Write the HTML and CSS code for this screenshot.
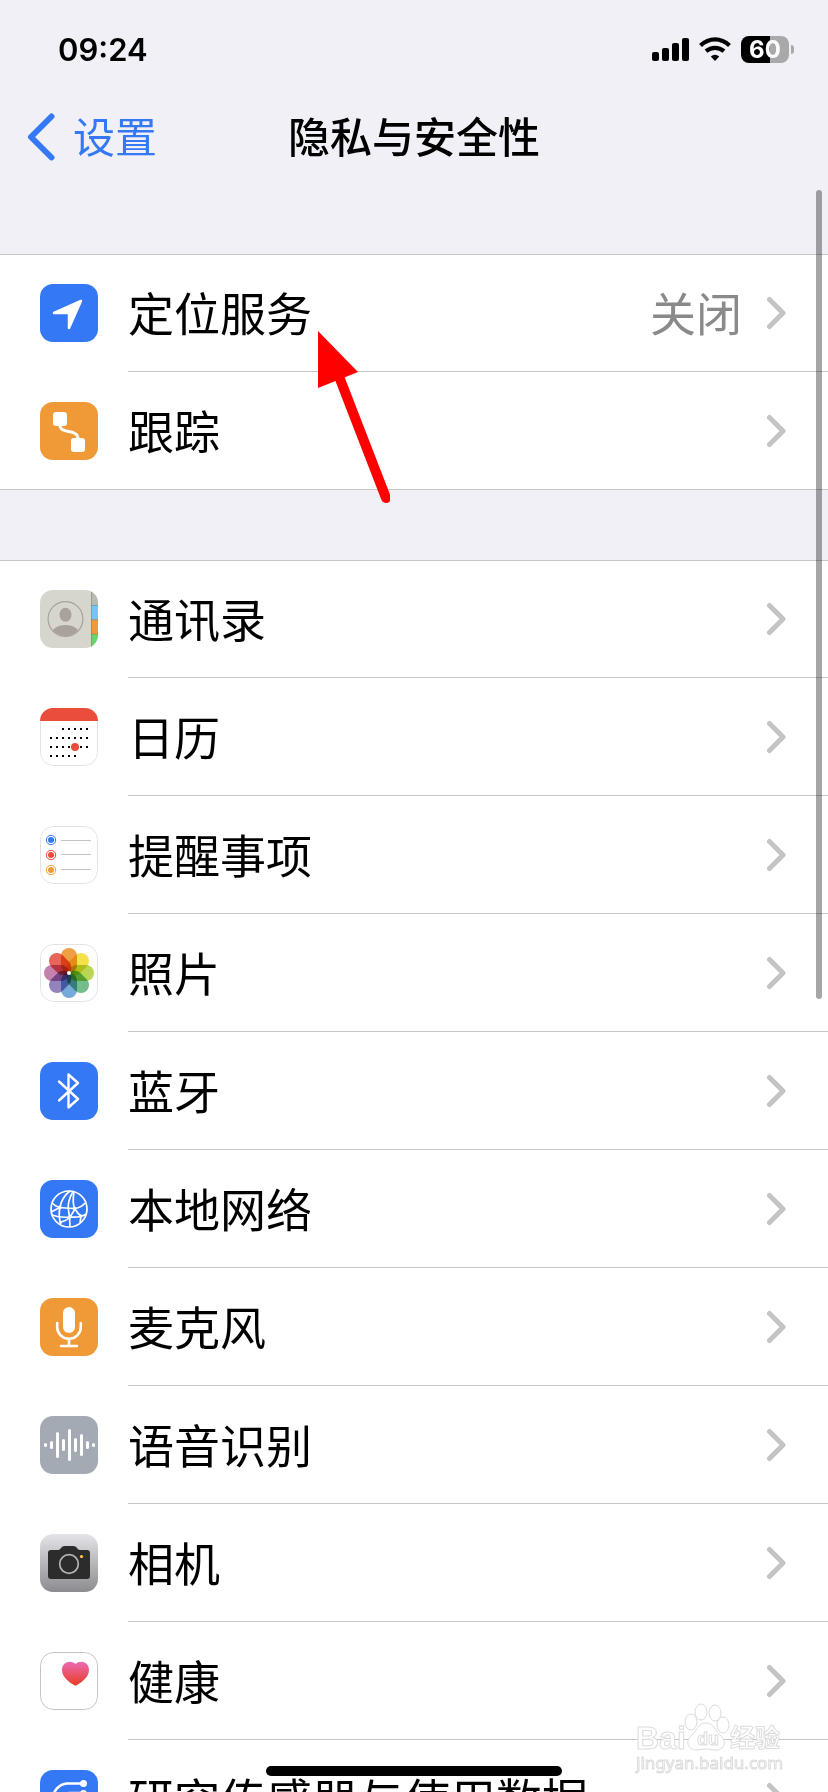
FILE: index.html
```html
<!DOCTYPE html>
<html lang="zh-CN">

<head>
    <title>隐私与安全性</title>
    <meta charset="UTF-8">
    <meta name="viewport" content="width=device-width, initial-scale=1.0">
    <link rel="stylesheet" href="styles.css">
</head>

<body>
    <div class="statusBar">
        <time class="statusBar-time">09:24</time>
        <div class="statusBar-icons">
            <svg width="37" height="24" viewBox="0 0 37 24">
                <rect x="0" y="15" width="7" height="9" rx="2" />
                <rect x="10" y="11" width="7" height="13" rx="2" />
                <rect x="20" y="6" width="7" height="18" rx="2" />
                <rect x="30" y="1" width="7" height="23" rx="2" />
            </svg>
            <svg width="32" height="24" viewBox="0 0 32 24">
                <path d="M1.500 8.500Q8 2.400 16 2.400T30.500 8.500" fill="none" stroke="#000" stroke-width="4.200" />
                <path d="M7 14.200Q11 10.800 16 10.800T25 14.200" fill="none" stroke="#000" stroke-width="4.200" />
                <path d="M11.800 19.500Q16 16 20.200 19.500L16 24z" />
            </svg>
            <div class="battery"><span class="battery-level">60</span></div>
        </div>
    </div>
    <header class="navBar">
        <a class="navBar-back" href="#">
            <svg width="28" height="48" viewBox="0 0 28 48">
                <path d="M24.500 3.500L4 24l20.500 20.500" />
            </svg>
            <span>设置</span>
        </a>
        <h1 class="navBar-title">隐私与安全性</h1>
    </header>
    <main>
        <nav class="group">
            <a class="row" href="#">
                <svg class="row-icon blue" viewBox="0 0 58 58">
                    <path d="M41 17L14 29h15v15z" fill="#fff" stroke="#fff" stroke-width="2.500" stroke-linejoin="round" />
                </svg>
                <span class="row-body">
                    <span class="row-label">定位服务</span>
                    <span class="row-value">关闭</span>
                    <svg class="chevron" viewBox="0 0 20 34"><path d="M3.500 3.500L17 17 3.500 30.500" /></svg>
                </span>
            </a>
            <a class="row" href="#">
                <svg class="row-icon orange" viewBox="0 0 58 58">
                    <rect x="13" y="10" width="14" height="14" rx="3" fill="#fff" />
                    <rect x="31" y="36" width="14" height="14" rx="3" fill="#fff" />
                    <path d="M20 23C20 33 38 26 38 37" fill="none" stroke="#fff" stroke-width="3" />
                </svg>
                <span class="row-body">
                    <span class="row-label">跟踪</span>
                    <svg class="chevron" viewBox="0 0 20 34"><path d="M3.500 3.500L17 17 3.500 30.500" /></svg>
                </span>
            </a>
        </nav>
        <nav class="group">
            <a class="row" href="#">
                <svg class="row-icon contacts" viewBox="0 0 58 58">
                    <clipPath id="avatar"><circle cx="25.500" cy="29" r="17" /></clipPath>
                    <rect x="51" width="7" height="15" fill="#b9bab1" />
                    <rect x="51" y="15" width="7" height="15" fill="#76c3f5" />
                    <rect x="51" y="29.500" width="7" height="15" fill="#f09a37" />
                    <rect x="51" y="44" width="7" height="14" fill="#6cd36d" />
                    <path d="M51 15.500h7M51 29.800h7M51 44.300h7M51.500 0v58" stroke="#6d6d5c" stroke-opacity=".4" />
                    <circle cx="25.500" cy="29" r="17.400" fill="none" stroke="#a9a19c" stroke-width="1.200" />
                    <ellipse cx="25.500" cy="24.800" rx="6" ry="7" fill="#a9a19c" />
                    <ellipse cx="25.500" cy="46" rx="15" ry="11" fill="#a9a19c" clip-path="url(#avatar)" />
                </svg>
                <span class="row-body">
                    <span class="row-label">通讯录</span>
                    <svg class="chevron" viewBox="0 0 20 34"><path d="M3.500 3.500L17 17 3.500 30.500" /></svg>
                </span>
            </a>
            <a class="row" href="#">
                <svg class="row-icon" viewBox="0 0 58 58">
                    <rect x=".5" y=".5" width="57" height="57" rx="13" fill="#fff" stroke="#e2e2e4" />
                    <path d="M0 13V0h58v13z" fill="#eb4d3d" />
                    <g stroke="#000" stroke-width="2" stroke-dasharray="2 4">
                        <path d="M22 21h26M10 30h38M10 39h38M10 48h26" />
                    </g>
                    <circle cx="35" cy="39" r="4" fill="#eb4d3d" />
                </svg>
                <span class="row-body">
                    <span class="row-label">日历</span>
                    <svg class="chevron" viewBox="0 0 20 34"><path d="M3.500 3.500L17 17 3.500 30.500" /></svg>
                </span>
            </a>
            <a class="row" href="#">
                <svg class="row-icon" viewBox="0 0 58 58">
                    <rect x=".5" y=".5" width="57" height="57" rx="13" fill="#fff" stroke="#e2e2e4" />
                    <g fill="none">
                        <circle cx="11" cy="14" r="4.700" stroke="#3478f6" />
                        <circle cx="11" cy="29" r="4.700" stroke="#eb4d3d" />
                        <circle cx="11" cy="44" r="4.700" stroke="#f09a37" />
                    </g>
                    <circle cx="11" cy="14" r="3" fill="#3478f6" />
                    <circle cx="11" cy="29" r="3" fill="#eb4d3d" />
                    <circle cx="11" cy="44" r="3" fill="#f09a37" />
                    <path d="M21 14.500h30M21 28.500h30M21 43.500h30" stroke="#c4c4c6" />
                </svg>
                <span class="row-body">
                    <span class="row-label">提醒事项</span>
                    <svg class="chevron" viewBox="0 0 20 34"><path d="M3.500 3.500L17 17 3.500 30.500" /></svg>
                </span>
            </a>
            <a class="row" href="#">
                <svg class="row-icon" viewBox="0 0 58 58">
                    <rect x=".5" y=".5" width="57" height="57" rx="13" fill="#fff" stroke="#e2e2e4" />
                    <g class="petals">
                        <rect x="21" y="4" width="16" height="25" rx="8" fill="#f0a044" />
                        <rect x="21" y="4" width="16" height="25" rx="8" fill="#f4e04a" transform="rotate(45 29 29)" />
                        <rect x="21" y="4" width="16" height="25" rx="8" fill="#b9d655" transform="rotate(90 29 29)" />
                        <rect x="21" y="4" width="16" height="25" rx="8" fill="#72bd8b" transform="rotate(135 29 29)" />
                        <rect x="21" y="4" width="16" height="25" rx="8" fill="#76aadb" transform="rotate(180 29 29)" />
                        <rect x="21" y="4" width="16" height="25" rx="8" fill="#9384bd" transform="rotate(225 29 29)" />
                        <rect x="21" y="4" width="16" height="25" rx="8" fill="#c582b0" transform="rotate(270 29 29)" />
                        <rect x="21" y="4" width="16" height="25" rx="8" fill="#e8655a" transform="rotate(315 29 29)" />
                    </g>
                    <circle cx="29" cy="29" r="2" fill="#fff" />
                </svg>
                <span class="row-body">
                    <span class="row-label">照片</span>
                    <svg class="chevron" viewBox="0 0 20 34"><path d="M3.500 3.500L17 17 3.500 30.500" /></svg>
                </span>
            </a>
            <a class="row" href="#">
                <svg class="row-icon blue" viewBox="0 0 58 58">
                    <path d="M19 19.500L38 37l-9.500 8.500v-33L38 21 19 38.500" fill="none" stroke="#fff" stroke-width="2.400" stroke-linejoin="round" stroke-linecap="round" />
                </svg>
                <span class="row-body">
                    <span class="row-label">蓝牙</span>
                    <svg class="chevron" viewBox="0 0 20 34"><path d="M3.500 3.500L17 17 3.500 30.500" /></svg>
                </span>
            </a>
            <a class="row" href="#">
                <svg class="row-icon blue" viewBox="0 0 58 58">
                    <g fill="none" stroke="#fff" stroke-width="1.700">
                        <circle cx="29" cy="29" r="18" />
                        <path d="M30 11Q22 17 20 27T21 44" />
                        <path d="M33 11.500Q27 22 28.500 30T30 47" />
                        <path d="M34 11.500Q32 24 35 29T41 36L40 43" />
                        <path d="M12 23Q16 27 20 27.500T34 28.500Q41 28 45 23" />
                        <path d="M11 32L20 27.500M12 35Q20 38 30 37L35 29M30 37Q40 38 46.500 34M19 42Q25 42 30 37" />
                    </g>
                    <g fill="#fff">
                        <circle cx="20" cy="27.500" r="1.700" />
                        <circle cx="34.500" cy="28.500" r="1.700" />
                        <circle cx="30" cy="37" r="1.700" />
                        <circle cx="40.500" cy="36" r="1.700" />
                    </g>
                </svg>
                <span class="row-body">
                    <span class="row-label">本地网络</span>
                    <svg class="chevron" viewBox="0 0 20 34"><path d="M3.500 3.500L17 17 3.500 30.500" /></svg>
                </span>
            </a>
            <a class="row" href="#">
                <svg class="row-icon orange" viewBox="0 0 58 58">
                    <rect x="23" y="9" width="12" height="26" rx="6" fill="#fff" />
                    <path d="M17.200 25v4a11.800 11.800 0 0 0 23.600 0v-4M29 41v7M21 48h16" fill="none" stroke="#fff" stroke-width="2.600" stroke-linecap="round" />
                </svg>
                <span class="row-body">
                    <span class="row-label">麦克风</span>
                    <svg class="chevron" viewBox="0 0 20 34"><path d="M3.500 3.500L17 17 3.500 30.500" /></svg>
                </span>
            </a>
            <a class="row" href="#">
                <svg class="row-icon gray" viewBox="0 0 58 58">
                    <path d="M5.500 28.500v1M11.500 26.500v5M17.500 17.500v23M23.500 24.500v9M29.500 14.500v29M35.500 23.500v11M41.500 19.500v19M47.500 26.500v5M53.500 28.500v1" stroke="#fff" stroke-width="3" stroke-linecap="round" />
                </svg>
                <span class="row-body">
                    <span class="row-label">语音识别</span>
                    <svg class="chevron" viewBox="0 0 20 34"><path d="M3.500 3.500L17 17 3.500 30.500" /></svg>
                </span>
            </a>
            <a class="row" href="#">
                <svg class="row-icon camera" viewBox="0 0 58 58">
                    <path d="M11 16h7q2 0 3-2t4-2h8q3 0 4 2t3 2h7q3 0 3 3v23q0 3-3 3H11q-3 0-3-3V19q0-3 3-3z" fill="#2c2c2c" />
                    <circle cx="29" cy="30" r="9.300" fill="none" stroke="#b4b4b8" stroke-width="1.700" />
                    <circle cx="41.500" cy="22.500" r="1.600" fill="#f7ce46" />
                </svg>
                <span class="row-body">
                    <span class="row-label">相机</span>
                    <svg class="chevron" viewBox="0 0 20 34"><path d="M3.500 3.500L17 17 3.500 30.500" /></svg>
                </span>
            </a>
            <a class="row" href="#">
                <svg class="row-icon" viewBox="0 0 58 58">
                    <linearGradient id="heart" x2="0" y2="1">
                        <stop stop-color="#eb6bb4" />
                        <stop offset="1" stop-color="#ea3c24" />
                    </linearGradient>
                    <rect x=".5" y=".5" width="57" height="57" rx="13" fill="#fff" stroke="#c4c4c6" />
                    <path d="M35.500 12C31 7.500 22 9.500 22 18c0 7 7 12 12 15q1.500 1 3 0c5-3 12-8 12-15 0-8.500-9-10.500-13.500-6z" fill="url(#heart)" />
                </svg>
                <span class="row-body">
                    <span class="row-label">健康</span>
                    <svg class="chevron" viewBox="0 0 20 34"><path d="M3.500 3.500L17 17 3.500 30.500" /></svg>
                </span>
            </a>
            <a class="row" href="#">
                <svg class="row-icon blue" viewBox="0 0 58 58">
                    <g fill="none" stroke="#fff" stroke-width="2.600">
                        <path d="M43 13.500H27C19 14 13 21 13 29s6 15 14 15h16" />
                        <path d="M43 23H30q-7 0-7 6t7 6h13" />
                    </g>
                    <g fill="#fff">
                        <circle cx="43.500" cy="13.500" r="3.500" />
                        <circle cx="43.500" cy="23.500" r="3.500" />
                    </g>
                </svg>
                <span class="row-body">
                    <span class="row-label">研究传感器与使用数据</span>
                    <svg class="chevron" viewBox="0 0 20 34"><path d="M3.500 3.500L17 17 3.500 30.500" /></svg>
                </span>
            </a>
        </nav>
    </main>

    <!-- overlays -->
    <svg class="pointer" width="72" height="176" viewBox="0 0 72 176">
        <path d="M22 48l46 119" stroke="#f00" stroke-width="10" stroke-linecap="round" />
        <path d="M0 0l40 41L0 57z" fill="#f00" />
    </svg>
    <svg class="watermark" width="150" height="76" viewBox="0 0 150 76">
        <text x="1" y="46" font-size="32" font-weight="700">Bai</text>
        <text x="95" y="44" font-size="25" font-weight="700">经验</text>
        <text class="watermark-url" x="1" y="66" font-size="17">jingyan.baidu.com</text>
        <ellipse cx="56" cy="19" rx="6" ry="8" />
        <ellipse cx="66" cy="9" rx="6" ry="8" />
        <ellipse cx="80" cy="10" rx="6" ry="8" />
        <ellipse cx="88" cy="22" rx="6" ry="8" />
        <path d="M71 20c-8 0-9 8-14 12-8 7-3 15 4 15 4 0 6-1 10-1s6 1 10 1c8 0 12-8 4-15-5-4-6-12-14-12z" />
        <text x="62" y="42" font-size="18" font-weight="700">du</text>
    </svg>
    <div class="scrollbar"></div>
    <div class="homeIndicator"></div>
</body>

</html>
```
FILE: styles.css
```css
html {
    font-size: 46px;
}

body {
    position: relative;
    margin: 0;
    height: 100vh;
    overflow: hidden;
    background: #f1f0f6;
    color: black;
    font-family: 'Inter', 'Noto Sans CJK SC', sans-serif;
}

a {
    color: inherit;
    text-decoration: none;
}

.statusBar {
    height: 98px;
    padding: 0 34px 0 58px;
    box-sizing: border-box;
    display: flex;
    align-items: center;
    justify-content: space-between;
}

.statusBar-time {
    font-size: 31px;
    font-weight: 600;
}

.statusBar-icons {
    display: flex;
    align-items: center;
    gap: 10px;
}

.battery {
    display: flex;
    align-items: center;
    gap: 2px;
}

.battery-level {
    width: 48px;
    height: 27px;
    border-radius: 8px;
    background: linear-gradient(to right, black 60%, #a9a9ab 60%);
    color: white;
    font-size: 24px;
    font-weight: 700;
    line-height: 27px;
    text-align: center;
}

.battery::after {
    content: '';
    width: 3px;
    height: 9px;
    border-radius: 0 4px 4px 0;
    background: #a9a9ab;
}

.navBar {
    height: 78px;
    margin-bottom: 78px;
    padding: 0 27px;
    display: grid;
    grid-template-columns: 1fr auto 1fr;
    align-items: center;
    font-size: 42px;
}

.navBar-back {
    display: flex;
    align-items: center;
    gap: 18px;
    color: #3478f6;
}

.navBar-back span,
.navBar-title {
    padding-bottom: 6px;
}

.navBar-back path {
    fill: none;
    stroke: #3478f6;
    stroke-width: 6;
    stroke-linecap: round;
    stroke-linejoin: round;
}

.navBar-title {
    margin: 0;
    font-size: 42px;
    font-weight: 500;
}

.group {
    margin-bottom: 70px;
    background: white;
    box-shadow: inset 0 1px #c6c6c8, inset 0 -1px #c6c6c8;
}

.row {
    height: 118px;
    padding-left: 40px;
    display: flex;
    align-items: center;
    gap: 30px;
}

.row-icon {
    width: 58px;
    height: 58px;
    flex: none;
    border-radius: 13px;
}

.row-body {
    flex: 1;
    height: 100%;
    padding-right: 42px;
    display: flex;
    align-items: center;
    gap: 24px;
    box-shadow: inset 0 -1px #c6c6c8;
}

.row:last-child .row-body {
    box-shadow: none;
}

.row-label,
.row-value {
    padding-bottom: 5px;
}

.row-label {
    flex: 1;
    white-space: nowrap;
}

.row-value {
    color: #8a8a8d;
}

.chevron {
    width: 20px;
    height: 34px;
    fill: none;
    stroke: #c4c4c6;
    stroke-width: 5;
    stroke-linecap: round;
    stroke-linejoin: round;
}

.blue {
    background: #3478f6;
}

.orange {
    background: #f09a37;
}

.gray {
    background: #a3aab4;
}

.contacts {
    background: #d6d6cd;
}

.camera {
    background: linear-gradient(#e4e4e8, #8c8b90);
}

.petals rect {
    mix-blend-mode: multiply;
}

.pointer {
    position: absolute;
    top: 331px;
    left: 318px;
}

.watermark {
    position: absolute;
    right: 43px;
    bottom: 13px;
    fill: white;
    stroke: #dcdcdc;
    font-family: 'Liberation Sans', 'Noto Sans CJK SC', sans-serif;
}

.watermark-url {
    font-family: 'Noto Sans', sans-serif;
}

.scrollbar {
    position: absolute;
    top: 190px;
    right: 6px;
    width: 6px;
    height: 809px;
    border-radius: 3px;
    background: rgba(0, 0, 0, .35);
}

.homeIndicator {
    position: absolute;
    bottom: 16px;
    left: 50%;
    width: 296px;
    height: 10px;
    border-radius: 5px;
    background: black;
    transform: translateX(-50%);
}
```
